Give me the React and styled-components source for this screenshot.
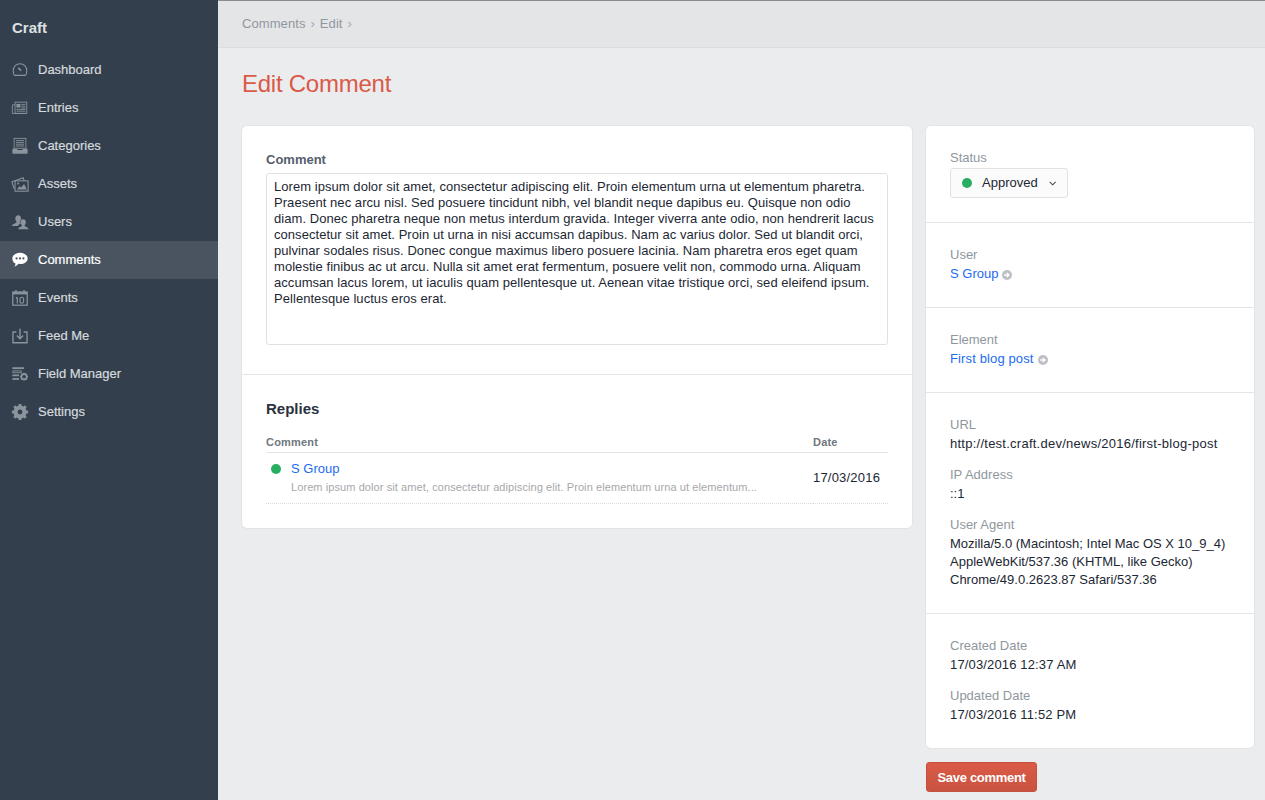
import styled, { createGlobalStyle } from "styled-components";

const GlobalStyle = createGlobalStyle`
  html, body {
    margin: 0;
    padding: 0;
    height: 100%;
    overflow: hidden;
  }
  body {
    font-family: "Liberation Sans", Arial, sans-serif;
    font-size: 13px;
    line-height: 18px;
    color: #1c2733;
    background: #ebecee;
  }
  * {
    box-sizing: border-box;
  }
`;

//Sidebar icons
const icons = {
  dashboard: (
    <>
      <path d="M2.500 10.500a7.500 7.500 0 1 1 15 0c0 1.800-.3 3.300-1 4.700-.2.500-.6.800-1.100.8H4.600c-.5 0-.9-.3-1.100-.8-.7-1.400-1-2.900-1-4.700z" fill="none" stroke="currentColor" strokeWidth="1.200" />
      <path d="M8 7.500l3.200 3.200" stroke="currentColor" strokeWidth="1.800" />
    </>
  ),
  entries: (
    <>
      <path d="M1.500 6.500h3M1.500 6.500v9.500h14.500" fill="none" stroke="currentColor" strokeWidth="1" />
      <rect x="4.500" y="3.500" width="13" height="12.500" fill="none" stroke="currentColor" strokeWidth="1" />
      <rect x="6" y="5.500" width="4.500" height="4" fill="currentColor" />
      <path d="M11.500 6h4.500M11.500 8h4.500M11.500 10h4.500M6 11.500h10M6 13.500h10" stroke="currentColor" strokeWidth="1" />
    </>
  ),
  categories: (
    <>
      <rect x="3.500" y="1.500" width="13" height="11" fill="none" stroke="currentColor" strokeWidth="1" />
      <path d="M5.500 4h9M5.500 6h9M5.500 8h9M5.500 10h9" stroke="currentColor" strokeWidth="1" />
      <path d="M1.500 13h5.500v1.500h6V13h5.500v4.500c0 .6-.4 1-1 1h-15c-.6 0-1-.4-1-1z" fill="currentColor" />
    </>
  ),
  assets: (
    <>
      <path d="M3.500 15.500L1 7.500 13.500 3l1.200 3.500" fill="none" stroke="currentColor" strokeWidth="1.200" />
      <rect x="4.500" y="6.500" width="14.500" height="11.500" fill="none" stroke="currentColor" strokeWidth="1.200" />
      <path d="M6.500 16l3-3.500 2 1.500 3-4 3 6z" fill="currentColor" />
      <circle cx="8" cy="9.500" r="1.100" fill="currentColor" />
    </>
  ),
  users: (
    <>
      <path d="M8 2.500c2 0 3.200 1.500 3.200 3.500 0 1.400-.6 2.800-1.400 3.500v1.200c.6.300 1.100.5 1.500.7-1.800.7-3 1.800-3.500 3.100H1c.1-1.700 2-2.800 5-3.800V9.500C5.200 8.800 4.800 7.400 4.800 6c0-2 1.200-3.500 3.200-3.500z" fill="currentColor" />
      <path d="M13.500 7c1.900 0 3 1.400 3 3.300 0 1.300-.5 2.500-1.300 3.200v1.100c2.500.7 4.300 1.700 4.300 3.400H8c0-1.700 1.800-2.700 4-3.400v-1.100c-.8-.7-1.400-1.900-1.400-3.200C10.600 8.400 11.600 7 13.500 7z" fill="currentColor" />
    </>
  ),
  comments: (
    <>
      <path d="M10 2c4.700 0 8.500 2.700 8.500 6.200s-3.800 6.200-8.500 6.200c-.6 0-1.200 0-1.800-.1-1 1.500-2.500 2.600-4.400 3.100.7-.9 1.100-2 1.200-3.600-2.400-1.100-3.500-3.100-3.500-5.600C1.500 4.700 5.300 2 10 2z" fill="currentColor" />
      <circle cx="6.200" cy="8.200" r="1.200" fill="#4a5460" />
      <circle cx="10" cy="8.200" r="1.200" fill="#4a5460" />
      <circle cx="13.800" cy="8.200" r="1.200" fill="#4a5460" />
    </>
  ),
  events: (
    <>
      <rect x="2" y="3.500" width="16" height="14.500" fill="none" stroke="currentColor" strokeWidth="1.400" />
      <path d="M2 3h16v3H2z" fill="currentColor" />
      <path d="M5.500 1v3.500M14.500 1v3.500" stroke="currentColor" strokeWidth="1.600" />
      <path d="M7 9v7M7 9L5.400 10.300" fill="none" stroke="currentColor" strokeWidth="1.300" />
      <rect x="10" y="9.200" width="4" height="6.600" rx="1.800" fill="none" stroke="currentColor" strokeWidth="1.300" />
    </>
  ),
  feed: (
    <>
      <path d="M6 5.500H2.200v12h15.600v-12H14" fill="none" stroke="currentColor" strokeWidth="1.500" />
      <path d="M10 2v11M6.500 9.500l3.500 3.500 3.500-3.500" fill="none" stroke="currentColor" strokeWidth="1.600" />
    </>
  ),
  fields: (
    <>
      <rect x="1.500" y="2.500" width="13" height="2" fill="currentColor" />
      <path d="M2 6.500h9.500v2H2z" fill="none" stroke="currentColor" strokeWidth="1" />
      <rect x="1.500" y="10.500" width="7.500" height="2" fill="currentColor" />
      <rect x="1.500" y="14.500" width="7.500" height="2" fill="currentColor" />
      <circle cx="14.500" cy="13" r="3" fill="none" stroke="currentColor" strokeWidth="2" />
      <path d="M14.500 8.500v2M14.500 15.500v2M10 13h2M17 13h2M11.300 9.800l1.400 1.400M16.300 14.800l1.400 1.400M11.300 16.200l1.400-1.400M16.300 11.200l1.400-1.400" stroke="currentColor" strokeWidth="1.300" />
    </>
  ),
  settings: (
    <>
      <circle cx="10" cy="10" r="5" fill="none" stroke="currentColor" strokeWidth="4.600" />
      <path d="M10 1v3M10 16v3M1 10h3M16 10h3M3.600 3.600l2.200 2.200M14.200 14.200l2.200 2.200M3.600 16.400l2.200-2.200M14.200 5.800l2.200-2.200" stroke="currentColor" strokeWidth="3.200" />
    </>
  ),
};

const navItems = [
  { id: "dashboard", label: "Dashboard" },
  { id: "entries", label: "Entries" },
  { id: "categories", label: "Categories" },
  { id: "assets", label: "Assets" },
  { id: "users", label: "Users" },
  { id: "comments", label: "Comments", active: true },
  { id: "events", label: "Events" },
  { id: "feed", label: "Feed Me" },
  { id: "fields", label: "Field Manager" },
  { id: "settings", label: "Settings" },
];

const commentText =
  "Lorem ipsum dolor sit amet, consectetur adipiscing elit. Proin elementum urna ut elementum pharetra. Praesent nec arcu nisl. Sed posuere tincidunt nibh, vel blandit neque dapibus eu. Quisque non odio diam. Donec pharetra neque non metus interdum gravida. Integer viverra ante odio, non hendrerit lacus consectetur sit amet. Proin ut urna in nisi accumsan dapibus. Nam ac varius dolor. Sed ut blandit orci, pulvinar sodales risus. Donec congue maximus libero posuere lacinia. Nam pharetra eros eget quam molestie finibus ac ut arcu. Nulla sit amet erat fermentum, posuere velit non, commodo urna. Aliquam accumsan lacus lorem, ut iaculis quam pellentesque ut. Aenean vitae tristique orci, sed eleifend ipsum. Pellentesque luctus eros erat.";

const GoIcon = () => (
  <GoSvg viewBox="0 0 10 10">
    <circle cx="5" cy="5" r="5" fill="#bcc0c5" />
    <path d="M2.200 5h4.600M4.800 2.900L7 5 4.800 7.100" fill="none" stroke="#ffffff" strokeWidth="1.300" />
  </GoSvg>
);

const App = () => {
  return (
    <Page>
      <GlobalStyle />
      <Sidebar>
        <Brand>Craft</Brand>
        <Nav>
          {navItems.map((item) => (
            <NavItem key={item.id} $active={item.active}>
              <NavIcon viewBox="0 0 20 20" $active={item.active}>
                {icons[item.id]}
              </NavIcon>
              {item.label}
            </NavItem>
          ))}
        </Nav>
      </Sidebar>
      <Main>
        <Crumbs>
          <Crumb>Comments</Crumb>
          <CrumbSep>›</CrumbSep>
          <Crumb>Edit</Crumb>
          <CrumbSep>›</CrumbSep>
        </Crumbs>
        <Title>Edit Comment</Title>
        <Columns>
          <Card>
            <CommentSection>
              <FieldTitle>Comment</FieldTitle>
              <CommentBox readOnly value={commentText} />
            </CommentSection>
            <RepliesSection>
              <RepliesTitle>Replies</RepliesTitle>
              <ReplyTable>
                <thead>
                  <tr>
                    <HeadCell>Comment</HeadCell>
                    <HeadCell $date>Date</HeadCell>
                  </tr>
                </thead>
                <tbody>
                  <tr>
                    <ReplyCell>
                      <ReplyName>
                        <Dot />
                        <Link>S Group</Link>
                      </ReplyName>
                      <ReplyExcerpt>
                        Lorem ipsum dolor sit amet, consectetur adipiscing elit. Proin elementum urna ut elementum...
                      </ReplyExcerpt>
                    </ReplyCell>
                    <ReplyCell $date>17/03/2016</ReplyCell>
                  </tr>
                </tbody>
              </ReplyTable>
            </RepliesSection>
          </Card>
          <Aside>
            <Card>
              <MetaSection $h={97}>
                <MetaLabel>Status</MetaLabel>
                <StatusButton>
                  <Dot />
                  Approved
                  <Chevron viewBox="0 0 8 5">
                    <path d="M.7.8L4 4l3.300-3.200" fill="none" stroke="#3a4048" strokeWidth="1.100" />
                  </Chevron>
                </StatusButton>
              </MetaSection>
              <MetaSection $h={85}>
                <MetaLabel>User</MetaLabel>
                <div>
                  <Link>S Group</Link>
                  <GoIcon />
                </div>
              </MetaSection>
              <MetaSection $h={85}>
                <MetaLabel>Element</MetaLabel>
                <div>
                  <Link $wide>First blog post</Link>
                  <GoIcon />
                </div>
              </MetaSection>
              <MetaSection $h={221}>
                <MetaGroup>
                  <MetaLabel>URL</MetaLabel>
                  <UrlValue>http://test.craft.dev/news/2016/first-blog-post</UrlValue>
                </MetaGroup>
                <MetaGroup>
                  <MetaLabel>IP Address</MetaLabel>
                  <div>::1</div>
                </MetaGroup>
                <MetaGroup>
                  <MetaLabel>User Agent</MetaLabel>
                  <div>
                    Mozilla/5.0 (Macintosh; Intel Mac OS X 10_9_4) AppleWebKit/537.36 (KHTML, like Gecko)
                    Chrome/49.0.2623.87 Safari/537.36
                  </div>
                </MetaGroup>
              </MetaSection>
              <MetaSection $h={134}>
                <MetaGroup>
                  <MetaLabel>Created Date</MetaLabel>
                  <DateValue>17/03/2016 12:37 AM</DateValue>
                </MetaGroup>
                <MetaGroup>
                  <MetaLabel>Updated Date</MetaLabel>
                  <DateValue>17/03/2016 11:52 PM</DateValue>
                </MetaGroup>
              </MetaSection>
            </Card>
            <SaveButton>Save comment</SaveButton>
          </Aside>
        </Columns>
      </Main>
    </Page>
  );
};

const Page = styled.div`
  display: flex;
  height: 800px;
  overflow: hidden;
`;

const Sidebar = styled.nav`
  width: 218px;
  flex: none;
  background: #333f4d;
  color: #d5d9dd;
`;

const Brand = styled.div`
  height: 51px;
  padding: 19px 12px 0;
  font-size: 15px;
  font-weight: 700;
  color: #dde0e3;
`;

const Nav = styled.div`
  display: flex;
  flex-direction: column;
`;

const NavItem = styled.div`
  display: flex;
  align-items: center;
  gap: 9px;
  height: 38px;
  padding-left: 11px;
  background: ${(p) => (p.$active ? "#4a5460" : "transparent")};
  color: ${(p) => (p.$active ? "#ffffff" : "#d5d9dd")};
  -webkit-text-stroke: 0.2px currentColor;
`;

const NavIcon = styled.svg`
  width: 18px;
  height: 18px;
  flex: none;
  color: ${(p) => (p.$active ? "#ffffff" : "#8b939c")};
`;

const Main = styled.main`
  flex: 1;
  min-width: 0;
  border-top: 1px solid #8c8c8c;
`;

const Crumbs = styled.div`
  display: flex;
  align-items: center;
  height: 47px;
  padding: 0 24px;
  gap: 5px;
  background: #e4e5e7;
  border-bottom: 1px solid #dcdde0;
  color: #8f979e;
`;

const Crumb = styled.span`
  letter-spacing: 0.08px;
`;

const CrumbSep = styled.span`
  color: #a3a9af;
`;

const Title = styled.h1`
  margin: 0;
  padding: 22px 24px 0;
  height: 78px;
  font-size: 24px;
  line-height: 28px;
  font-weight: 400;
  letter-spacing: -0.25px;
  color: #da5a47;
`;

const Columns = styled.div`
  display: flex;
  align-items: flex-start;
  gap: 14px;
  padding: 0 11px 0 24px;
`;

const Card = styled.section`
  background: #ffffff;
  border-radius: 5px;
  box-shadow: 0 0 0 1px rgba(0, 0, 0, 0.03);
  overflow: hidden;
  width: 100%;
  flex: 1;
`;

const CommentSection = styled.div`
  height: 249px;
  padding: 25px 24px 0;
  border-bottom: 1px solid #e3e5e8;
`;

const FieldTitle = styled.div`
  font-weight: 700;
  color: #55606c;
  line-height: 18px;
  margin-bottom: 4px;
`;

const CommentBox = styled.textarea`
  display: block;
  width: 100%;
  height: 172px;
  padding: 5px 7px;
  border: 1px solid #dfe1e4;
  border-radius: 3px;
  font: inherit;
  line-height: 16px;
  letter-spacing: 0.05px;
  color: #1c2733;
  resize: none;
  outline: none;
  overflow: hidden;
`;

const RepliesSection = styled.div`
  height: 153px;
  padding: 24px 24px 0;
`;

const RepliesTitle = styled.h2`
  margin: 0;
  font-size: 15px;
  line-height: 20px;
  font-weight: 700;
  color: #29323d;
`;

const ReplyTable = styled.table`
  width: 100%;
  margin-top: 14px;
  border-collapse: collapse;
  table-layout: fixed;
`;

const HeadCell = styled.th`
  width: ${(p) => (p.$date ? "75px" : "auto")};
  height: 19px;
  padding: 0;
  text-align: left;
  font-size: 11px;
  line-height: 14px;
  font-weight: 700;
  color: #6f777f;
  letter-spacing: 0.2px;
  border-bottom: 1px solid #e3e5e8;
`;

const ReplyCell = styled.td`
  height: 51px;
  padding: ${(p) => (p.$date ? "0" : "8px 0 0 5px")};
  vertical-align: ${(p) => (p.$date ? "middle" : "top")};
  letter-spacing: ${(p) => (p.$date ? "0.2px" : "0")};
  border-bottom: 1px dotted #d8dadd;
`;

const ReplyName = styled.div`
  display: flex;
  align-items: center;
  gap: 10px;
  height: 16px;
`;

const ReplyExcerpt = styled.div`
  margin: 3px 0 0 20px;
  font-size: 11px;
  line-height: 14px;
  letter-spacing: 0.086px;
  white-space: nowrap;
  color: #a5a8ac;
`;

const Dot = styled.span`
  display: inline-block;
  flex: none;
  width: 10px;
  height: 10px;
  border-radius: 50%;
  background: #27ae60;
`;

const Link = styled.span`
  color: #1a6cf0;
  letter-spacing: ${(p) => (p.$wide ? "0.13px" : "0")};
`;

const GoSvg = styled.svg`
  display: inline-block;
  width: 10px;
  height: 10px;
  margin-left: 4px;
  vertical-align: -2px;
`;

const Aside = styled.div`
  width: 328px;
  flex: none;
`;

const MetaSection = styled.div`
  height: ${(p) => p.$h}px;
  padding: 22px 24px 0;
  border-bottom: 1px solid #e3e5e8;
  &:last-child {
    border-bottom: 0;
  }
`;

const MetaGroup = styled.div`
  margin-bottom: 12px;
`;

const MetaLabel = styled.div`
  color: #8f979e;
  line-height: 20px;
`;

const UrlValue = styled.div`
  letter-spacing: 0.25px;
`;

const DateValue = styled.div`
  letter-spacing: 0.15px;
`;

const StatusButton = styled.div`
  display: flex;
  align-items: center;
  width: 118px;
  height: 30px;
  padding: 0 11px;
  gap: 10px;
  border: 1px solid #e0e1e3;
  border-radius: 3px;
  background: #fbfbfb;
`;

const Chevron = styled.svg`
  width: 8px;
  height: 5px;
  margin-left: 1px;
`;

const SaveButton = styled.button`
  display: block;
  width: 111px;
  height: 30px;
  margin-top: 14px;
  padding: 0;
  border: 1px solid #c4513f;
  border-radius: 3px;
  background: linear-gradient(#da5a47, #c9533f);
  color: #ffffff;
  font: 700 13px "Liberation Sans", Arial, sans-serif;
  letter-spacing: -0.3px;
`;

export default App;
